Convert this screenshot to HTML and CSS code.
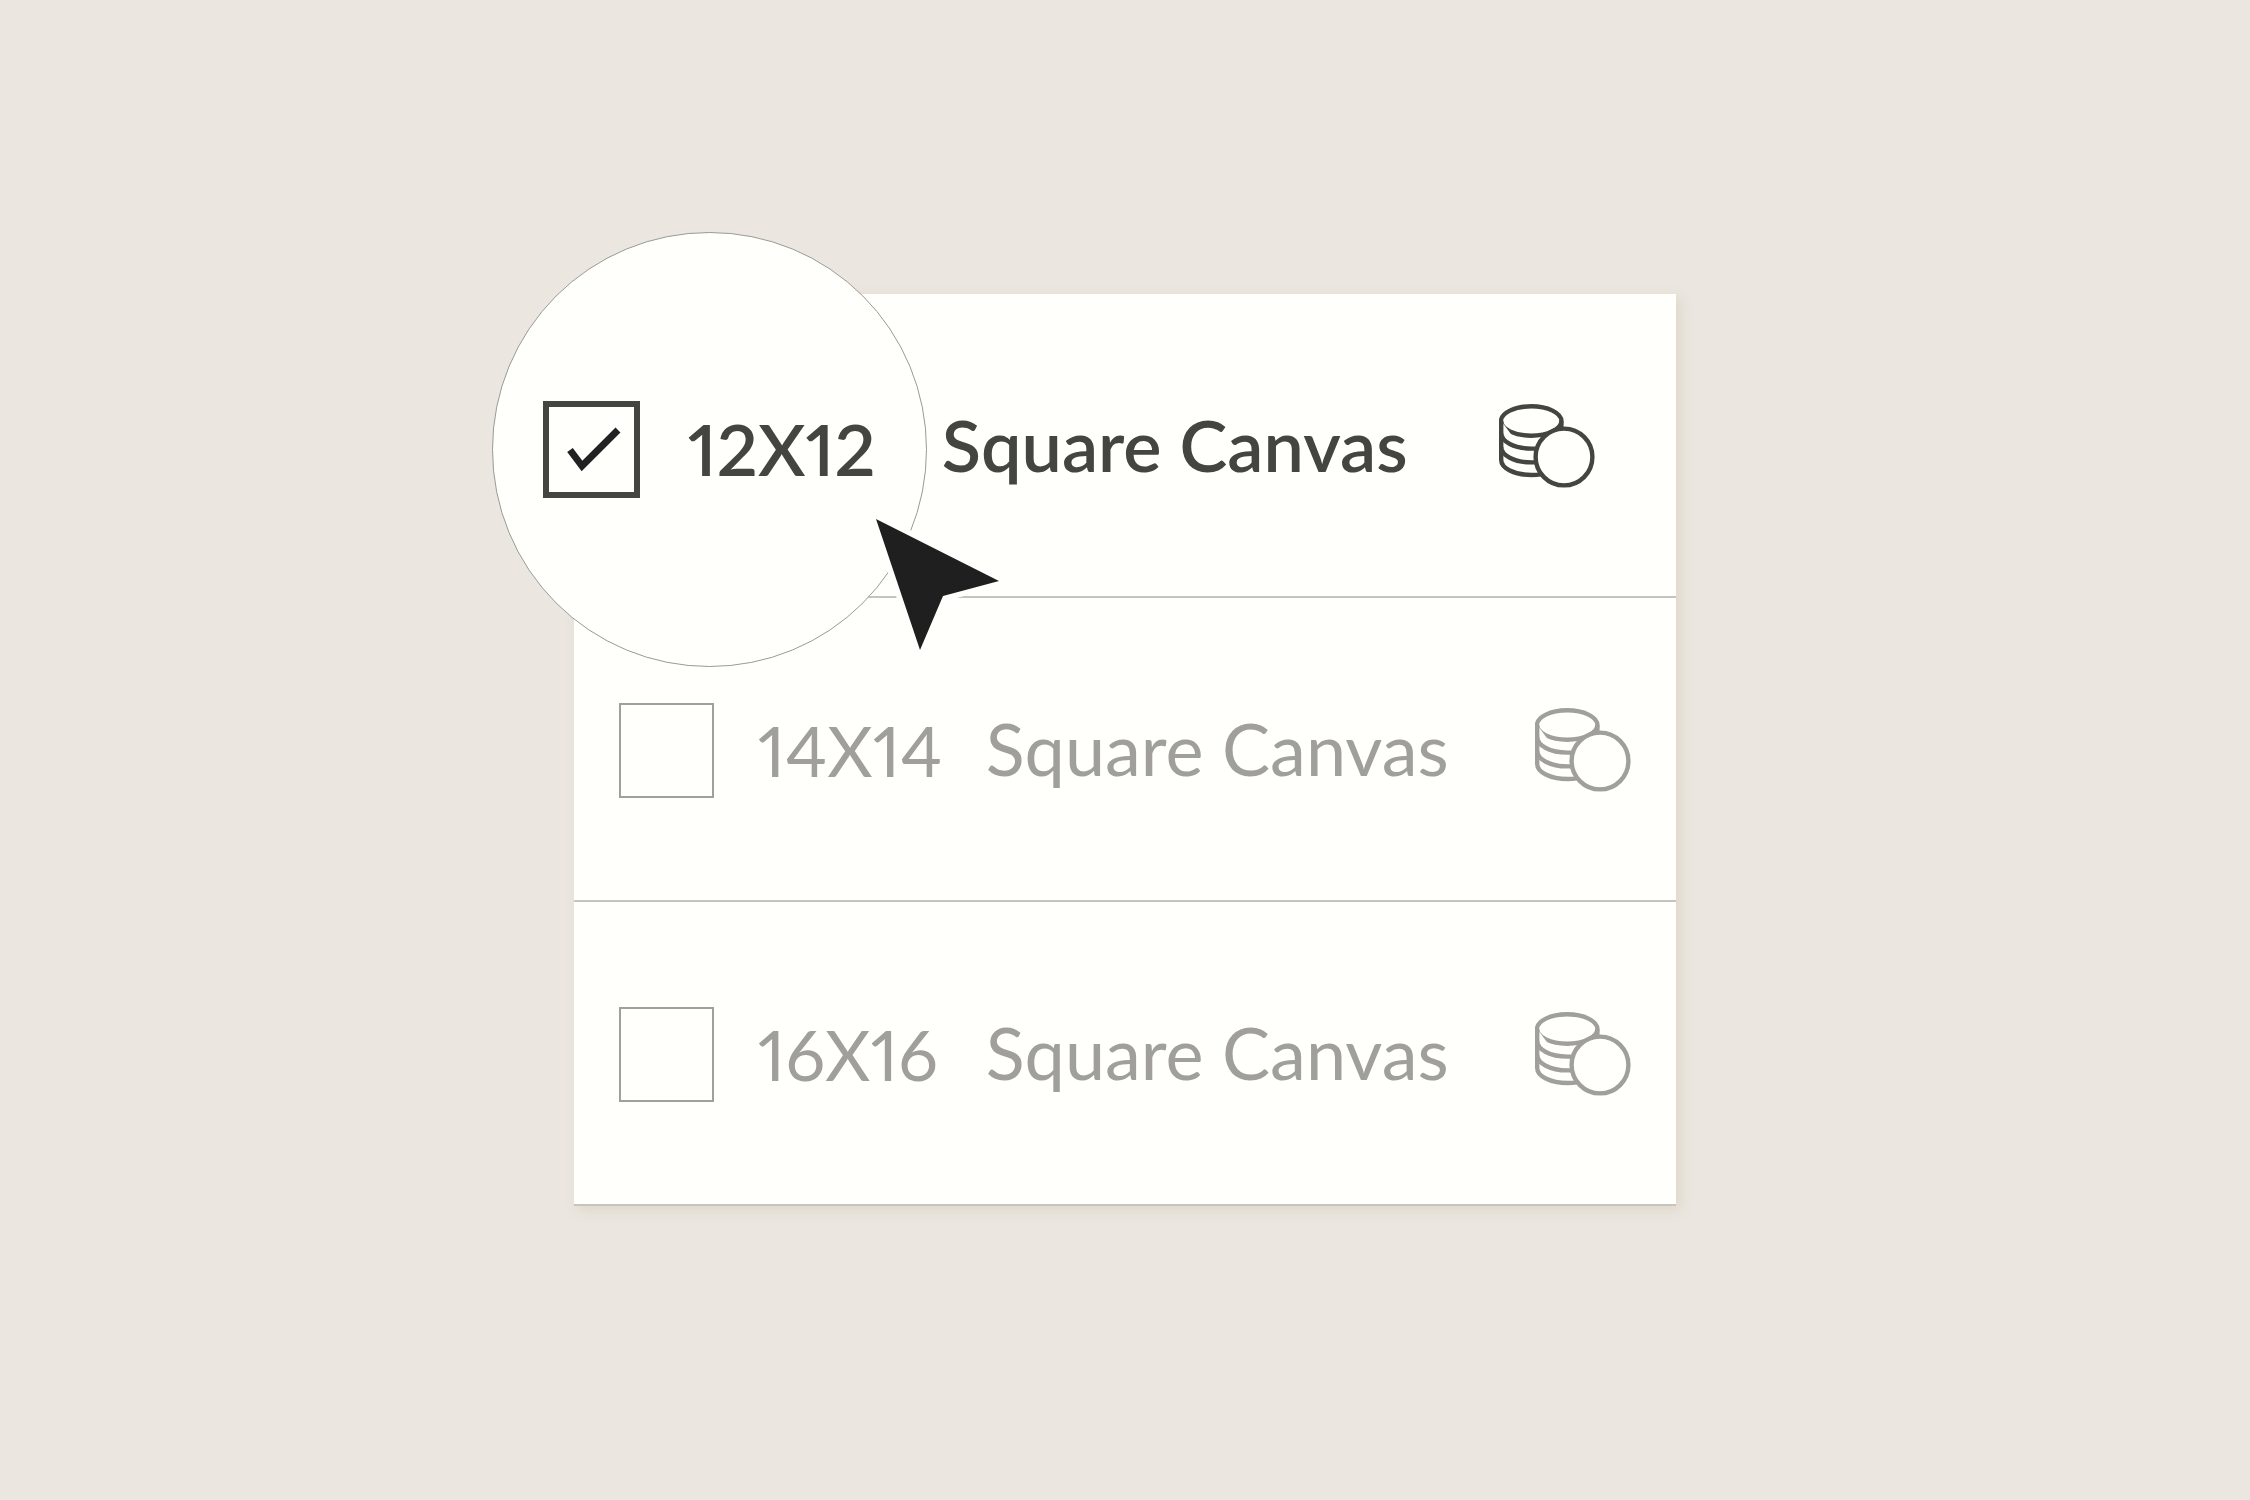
FILE: index.html
```html
<!DOCTYPE html>
<html lang="en">
<head>
	<meta charset="utf-8">
	<title>Square Canvas</title>
	<link rel="stylesheet" href="styles.css">
</head>
<body>
	<!-- shared coins icon -->
	<svg class="defs" width="0" height="0" aria-hidden="true">
		<symbol id="coins" viewBox="0 0 96 84">
			<ellipse cx="32.2" cy="17" rx="30.2" ry="14.7"/>
			<path d="M2.2 17V56C2.2 64 15 71 32.5 71C36 71 39 70.8 42 70.4"/>
			<path d="M2.2 29C2.2 37.5 15 44.6 32.5 44.6H40"/>
			<path d="M2.2 43C2.2 51 15 58.4 32.5 58.4H38"/>
			<path d="M62.4 17V26"/>
			<circle cx="65" cy="53" r="28.4"/>
		</symbol>
	</svg>

	<main class="card">
		<div class="row row-active">
			<label class="option">
				<span class="lens">
					<span class="check">
						<input type="checkbox" class="box" checked>
						<svg class="tick" viewBox="0 0 97 97"><path d="M27 49L39 65L75 29"/></svg>
					</span>
					<span class="size">12X12</span>
				</span>
				<span class="name">Square Canvas</span>
			</label>
			<svg class="coins"><use href="#coins"/></svg>
			<!-- mouse pointer -->
			<svg class="pointer" viewBox="0 0 144 152"><path d="M10 10L133 72L77 87L54 141Z"/><path class="arrow" d="M10 10L133 72L77 87L54 141Z"/></svg>
		</div>
		<div class="row">
			<label class="option">
				<input type="checkbox" class="box">
				<span class="size">14X14</span>
				<span class="name">Square Canvas</span>
			</label>
			<svg class="coins"><use href="#coins"/></svg>
		</div>
		<div class="row">
			<label class="option">
				<input type="checkbox" class="box">
				<span class="size">16X16</span>
				<span class="name">Square Canvas</span>
			</label>
			<svg class="coins"><use href="#coins"/></svg>
		</div>
	</main>
</body>
</html>
```
FILE: styles.css
```css
* {
	box-sizing: border-box;
	margin: 0;
	padding: 0;
}

body {
	min-height: 100vh;
	display: grid;
	place-items: center;
	background: #ebe6e0;
	color: #a09f9b;
	font-family: Lato, "Open Sans", sans-serif;
	font-size: 70px;
	line-height: 84px;
}

.defs {
	position: absolute;
}

.card {
	width: 49%;
	min-width: 1101px;
	background: #fffffb;
	box-shadow: 4px 4px 12px rgba(190,170,130,0.25);
}

.row {
	position: relative;
	display: flex;
	align-items: center;
	justify-content: space-between;
	height: 304px;
	padding: 2px 45px 0;
	border-bottom: 2px solid #c4c4c1;
}

.option {
	display: flex;
	align-items: center;
	white-space: nowrap;
	cursor: pointer;
}

.box {
	appearance: none;
	width: 95px;
	height: 95px;
	border: 2px solid #a09f9b;
	background: transparent;
}

.size {
	width: 184px;
	margin: 0 44px;
	font-variant-numeric: proportional-nums;
}

.name {
	font-size: 72px;
	padding-bottom: 4px;
}

.coins {
	width: 96px;
	height: 84px;
	flex: none;
	overflow: visible;
	fill: #fffffb;
	stroke: #a09f9b;
	stroke-width: 4.4;
}

/* selected row */
.row-active {
	padding: 2px 81px 0 368px;
	color: #444441;
	font-weight: 600;
}
.row-active .coins {
	stroke: #444441;
}

.lens {
	position: absolute;
	left: -82px;
	top: -62px;
	width: 435px;
	height: 435px;
	display: flex;
	align-items: center;
	padding-left: 50px;
	border: 1px solid #999995;
	border-radius: 50%;
	background: #fffffb;
}
.lens .size {
	font-size: 72px;
	margin-left: 48px;
	padding-bottom: 4px;
}

.check {
	display: grid;
}
.check .box,
.tick {
	grid-area: 1 / 1;
	width: 97px;
	height: 97px;
}
.check .box {
	border: 6px solid #444441;
}
.tick {
	fill: none;
	stroke: #222;
	stroke-width: 7;
	pointer-events: none;
}

.pointer {
	position: absolute;
	left: 292px;
	top: 215px;
	width: 144px;
	height: 152px;
	z-index: 1;
	fill: #fffffb;
	stroke: #fffffb;
	stroke-width: 11;
	pointer-events: none;
}
.arrow {
	fill: #1f1f1f;
	stroke: none;
}
```
